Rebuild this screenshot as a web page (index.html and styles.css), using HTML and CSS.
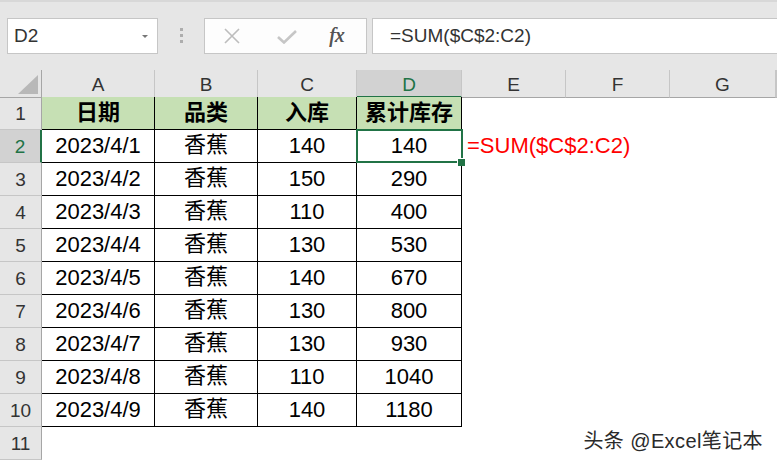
FILE: index.html
```html
<!DOCTYPE html>
<html lang="zh-CN">
<head>
  <meta charset="UTF-8" />
  <meta name="viewport" content="width=device-width, initial-scale=1.0"/>
  <title>累计库存</title>
  <link rel="stylesheet" href="styles.css">
</head>
<body>

  <!-- Formula bar -->
  <div class="toolbar">
    <div class="name-box">
      <span>D2</span>
      <span class="caret"></span>
    </div>
    <div class="grip"><i></i><i></i><i></i></div>
    <div class="fx-box">
      <svg class="ic-x" width="18" height="16" viewBox="0 0 18 16">
        <path d="M2 1 L16 15 M16 1 L2 15" stroke="#bdbdbd" stroke-width="1.6" fill="none"/>
      </svg>
      <svg class="ic-ok" width="20" height="14" viewBox="0 0 20 14">
        <path d="M1 7 L7 12.5 L19 1" stroke="#c6c6c6" stroke-width="2.6" fill="none"/>
      </svg>
      <span class="fx">fx</span>
    </div>
    <div class="formula">=SUM($C$2:C2)</div>
  </div>

  <!-- Sheet -->
  <div class="sheet">
    <div class="row head">
      <div class="corner"><span class="tri"></span></div>
      <div class="ch">A</div>
      <div class="ch">B</div>
      <div class="ch">C</div>
      <div class="ch active">D</div>
      <div class="ch">E</div>
      <div class="ch">F</div>
      <div class="ch">G</div>
      <div class="ch"></div>
    </div>

    <div class="row">
      <div class="rh">1</div>
      <div class="c t hd">日期</div>
      <div class="c t hd">品类</div>
      <div class="c t hd">入库</div>
      <div class="c t hd">累计库存</div>
      <div class="c"></div><div class="c"></div><div class="c"></div><div class="c"></div>
    </div>

    <div class="row">
      <div class="rh active">2</div>
      <div class="c t">2023/4/1</div>
      <div class="c t cn">香蕉</div>
      <div class="c t">140</div>
      <div class="c t sel">140</div>
      <div class="c note">=SUM($C$2:C2)</div>
      <div class="c"></div><div class="c"></div><div class="c"></div>
    </div>

    <div class="row">
      <div class="rh">3</div>
      <div class="c t">2023/4/2</div>
      <div class="c t cn">香蕉</div>
      <div class="c t">150</div>
      <div class="c t">290</div>
      <div class="c"></div><div class="c"></div><div class="c"></div><div class="c"></div>
    </div>

    <div class="row">
      <div class="rh">4</div>
      <div class="c t">2023/4/3</div>
      <div class="c t cn">香蕉</div>
      <div class="c t">110</div>
      <div class="c t">400</div>
      <div class="c"></div><div class="c"></div><div class="c"></div><div class="c"></div>
    </div>

    <div class="row">
      <div class="rh">5</div>
      <div class="c t">2023/4/4</div>
      <div class="c t cn">香蕉</div>
      <div class="c t">130</div>
      <div class="c t">530</div>
      <div class="c"></div><div class="c"></div><div class="c"></div><div class="c"></div>
    </div>

    <div class="row">
      <div class="rh">6</div>
      <div class="c t">2023/4/5</div>
      <div class="c t cn">香蕉</div>
      <div class="c t">140</div>
      <div class="c t">670</div>
      <div class="c"></div><div class="c"></div><div class="c"></div><div class="c"></div>
    </div>

    <div class="row">
      <div class="rh">7</div>
      <div class="c t">2023/4/6</div>
      <div class="c t cn">香蕉</div>
      <div class="c t">130</div>
      <div class="c t">800</div>
      <div class="c"></div><div class="c"></div><div class="c"></div><div class="c"></div>
    </div>

    <div class="row">
      <div class="rh">8</div>
      <div class="c t">2023/4/7</div>
      <div class="c t cn">香蕉</div>
      <div class="c t">130</div>
      <div class="c t">930</div>
      <div class="c"></div><div class="c"></div><div class="c"></div><div class="c"></div>
    </div>

    <div class="row">
      <div class="rh">9</div>
      <div class="c t">2023/4/8</div>
      <div class="c t cn">香蕉</div>
      <div class="c t">110</div>
      <div class="c t">1040</div>
      <div class="c"></div><div class="c"></div><div class="c"></div><div class="c"></div>
    </div>

    <div class="row">
      <div class="rh">10</div>
      <div class="c t">2023/4/9</div>
      <div class="c t cn">香蕉</div>
      <div class="c t">140</div>
      <div class="c t">1180</div>
      <div class="c"></div><div class="c"></div><div class="c"></div><div class="c"></div>
    </div>

    <div class="row">
      <div class="rh">11</div>
      <div class="c"></div><div class="c"></div><div class="c"></div><div class="c"></div>
      <div class="c"></div><div class="c"></div><div class="c"></div><div class="c"></div>
    </div>
  </div>

  <div class="watermark">头条 @Excel笔记本</div>

</body>
</html>
```

FILE: styles.css
```css
:root {
  --bar-bg: #e6e6e6;
  --line: #c6c6c6;
  --head-line: #a6a6a6;
  --excel-green: #217346;
  --head-fill: #c6e0b4;
  --active-head: #d2d2d2;
}

* {
  margin: 0;
  padding: 0;
  box-sizing: border-box;
}

body {
  width: 777px;
  height: 462px;
  overflow: hidden;
  background: #fff;
  font-family: "Liberation Sans", "Noto Sans CJK SC", sans-serif;
  color: #000;
  position: relative;
}

/* ---- toolbar ---- */
.toolbar {
  height: 70px;
  background: var(--bar-bg);
  border-top: 2px solid #d8d8d8;
  display: flex;
  align-items: flex-start;
  padding: 16px 0 0 7px;
}

.name-box {
  width: 151px;
  height: 36px;
  background: #fff;
  border: 1px solid var(--line);
  display: flex;
  align-items: center;
  justify-content: space-between;
  padding: 0 9px 0 6px;
  font-size: 19px;
  color: #333;
}

.caret {
  width: 0;
  height: 0;
  border-left: 3.5px solid transparent;
  border-right: 3.5px solid transparent;
  border-top: 3.5px solid #777;
}

.grip {
  width: 46px;
  height: 36px;
  display: flex;
  flex-direction: column;
  align-items: center;
  padding-top: 10px;
  gap: 3px;
}

.grip i {
  width: 3px;
  height: 3px;
  background: #adadad;
}

.fx-box {
  width: 163px;
  height: 36px;
  background: #fdfdfd;
  border: 1px solid var(--line);
  display: flex;
  align-items: center;
  padding-left: 18px;
}

.ic-x {
  margin-right: 36px;
}

.ic-ok {
  margin-right: 32px;
  margin-top: 1px;
}

.fx {
  font-family: "Liberation Serif", "DejaVu Serif", serif;
  font-style: italic;
  font-size: 21px;
  color: #555;
  margin-top: -2px;
  text-shadow: 0.4px 0 0 #555;
}

.formula {
  flex: 1;
  height: 36px;
  margin-left: 5px;
  background: #fff;
  border-top: 1px solid var(--line);
  border-bottom: 1px solid var(--line);
  border-left: 1px solid var(--line);
  display: flex;
  align-items: center;
  padding-left: 17px;
  font-size: 19px;
  color: #333;
}

/* ---- sheet ---- */
.row {
  display: grid;
  grid-template-columns: 42px 113px 103px 99px 105px 104px 104px 106px 1fr;
  height: 33px;
}

.row.head {
  height: 27px;
}

.corner {
  background: var(--bar-bg);
  border-right: 1px solid var(--head-line);
  border-bottom: 1px solid var(--head-line);
  position: relative;
}

.corner .tri {
  position: absolute;
  right: 3px;
  bottom: 3px;
  width: 0;
  height: 0;
  border-left: 20px solid transparent;
  border-bottom: 19px solid #b8b8b8;
}

.ch {
  background: var(--bar-bg);
  border-right: 1px solid var(--line);
  border-bottom: 1px solid var(--head-line);
  display: flex;
  align-items: center;
  justify-content: center;
  padding-top: 3px;
  font-size: 19px;
  color: #333;
}

.ch.active {
  background: var(--active-head);
  color: var(--excel-green);
  border-bottom: 2px solid var(--excel-green);
  padding-top: 4px;
}

.rh {
  background: var(--bar-bg);
  border-right: 1px solid var(--head-line);
  border-bottom: 1px solid var(--line);
  display: flex;
  align-items: center;
  justify-content: center;
  padding-top: 2px;
  font-size: 19px;
  color: #333;
}

.rh.active {
  background: var(--active-head);
  color: var(--excel-green);
  border-right: 2px solid var(--excel-green);
}

.c {
  border-right: 1px solid transparent;
  border-bottom: 1px solid transparent;
  display: flex;
  align-items: center;
  justify-content: center;
  font-size: 22px;
  line-height: 1;
  white-space: nowrap;
}

.c.t {
  border-right-color: #000;
  border-bottom-color: #000;
}

.c.cn {
  padding-bottom: 2px;
}

.c.hd {
  background: var(--head-fill);
  font-weight: bold;
  font-size: 22px;
  padding-bottom: 1px;
}

.c.sel {
  position: relative;
}

.c.sel::before {
  content: '';
  position: absolute;
  top: -1px;
  left: -1px;
  right: -2px;
  bottom: -1px;
  border: 2px solid var(--excel-green);
}

.c.sel::after {
  content: '';
  position: absolute;
  right: -4px;
  bottom: -4px;
  width: 7px;
  height: 7px;
  background: var(--excel-green);
  border-top: 1px solid #fff;
  border-left: 1px solid #fff;
}

.c.note {
  justify-content: flex-start;
  padding-left: 5px;
  color: #ff0000;
  overflow: visible;
}

/* ---- watermark ---- */
.watermark {
  position: absolute;
  right: 14px;
  top: 425px;
  font-family: "Liberation Sans", "Noto Sans CJK SC", sans-serif;
  font-size: 20px;
  letter-spacing: 0.4px;
  color: #2a2a2a;
  text-shadow: 0 0 2px #fff, 0 0 2px #fff;
}
```
